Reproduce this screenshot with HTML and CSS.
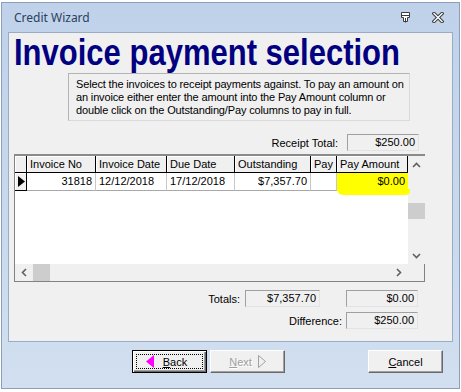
FILE: index.html
```html
<!DOCTYPE html>
<html lang="en">
<head>
  <meta charset="UTF-8" />
  <title>Credit Wizard</title>
  <link rel="stylesheet" href="styles.css">
</head>
<body>
  <div class="window">
    <div class="titlebar">
      <span class="caption">Credit Wizard</span>
      <div class="caption-icons">
        <svg class="pin" width="11" height="11" viewBox="0 0 11 11">
          <path d="M1.5 0.5 H9.5 V5.5 H7.5 V9.5 H3.5 V5.5 H1.5 Z" fill="#fff" stroke="#3c3c3c" />
          <path d="M1.5 3.5 H9.5" stroke="#3c3c3c" />
          <path d="M5.5 6 V10.5" stroke="#3c3c3c" />
        </svg>
        <svg class="close" width="12" height="11" viewBox="0 0 12 11">
          <path d="M2 1.5 L10 9.5 M10 1.5 L2 9.5" stroke="#3c3c3c" stroke-width="3.4" stroke-linecap="square" />
          <path d="M2 1.5 L10 9.5 M10 1.5 L2 9.5" stroke="#fff" stroke-width="1.4" stroke-linecap="square" />
        </svg>
      </div>
    </div>

    <div class="panel">
      <h1 class="heading">
        <svg width="440" height="40">
          <text x="5" y="32" textLength="386" lengthAdjust="spacingAndGlyphs">Invoice payment selection</text>
        </svg>
      </h1>

      <p class="intro">
        Select the invoices to receipt payments against. To pay an amount on<br>
        an invoice either enter the amount into the Pay Amount column or<br>
        double click on the Outstanding/Pay columns to pay in full.
      </p>

      <div class="receipt">
        <span class="label">Receipt Total:</span>
        <span class="field">$250.00</span>
      </div>

      <div class="grid">
        <div class="grid-main">
          <div class="grid-cells">
            <div class="grid-head">
              <span class="hcell"></span>
              <span class="hcell">Invoice No</span>
              <span class="hcell">Invoice Date</span>
              <span class="hcell">Due Date</span>
              <span class="hcell">Outstanding</span>
              <span class="hcell">Pay</span>
              <span class="hcell">Pay Amount</span>
            </div>
            <div class="grid-row">
              <span class="selector">
                <svg width="7" height="11" viewBox="0 0 7 11"><path d="M0 0 L7 5.5 L0 11 Z" fill="#000" /></svg>
              </span>
              <span class="cell num">31818</span>
              <span class="cell">12/12/2018</span>
              <span class="cell">17/12/2018</span>
              <span class="cell num">$7,357.70</span>
              <span class="cell"></span>
              <span class="cell num highlight">$0.00</span>
            </div>
          </div>
          <div class="vscroll">
            <span class="arrow">
              <svg width="9" height="6" viewBox="0 0 9 6"><path d="M1 5 L4.5 1.5 L8 5" fill="none" stroke="#606060" stroke-width="1.6" /></svg>
            </span>
            <div class="track"><span class="thumb"></span></div>
            <span class="arrow">
              <svg width="9" height="6" viewBox="0 0 9 6"><path d="M1 1 L4.5 4.5 L8 1" fill="none" stroke="#606060" stroke-width="1.6" /></svg>
            </span>
          </div>
        </div>
        <div class="hscroll-row">
          <div class="hscroll">
            <span class="arrow">
              <svg width="6" height="9" viewBox="0 0 6 9"><path d="M5 1 L1.5 4.5 L5 8" fill="none" stroke="#606060" stroke-width="1.6" /></svg>
            </span>
            <span class="hthumb"></span>
            <span class="spacer"></span>
            <span class="arrow">
              <svg width="6" height="9" viewBox="0 0 6 9"><path d="M1 1 L4.5 4.5 L1 8" fill="none" stroke="#606060" stroke-width="1.6" /></svg>
            </span>
          </div>
          <span class="corner"></span>
        </div>
      </div>

      <div class="totals">
        <span class="label">Totals:</span>
        <span class="field">$7,357.70</span>
        <span></span>
        <span class="field">$0.00</span>
        <span class="label wide">Difference:</span>
        <span class="field">$250.00</span>
      </div>
    </div>

    <div class="buttons">
      <button class="btn default">
        <span class="focus">
          <svg width="8" height="13" viewBox="0 0 8 13"><path d="M8 0 L0 6.5 L8 13 Z" fill="#ff00ff" /></svg>
          <span><u>B</u>ack</span>
        </span>
      </button>
      <button class="btn disabled">
        <span><u>N</u>ext</span>
        <svg width="8" height="13" viewBox="0 0 8 13"><path d="M0.5 0.5 L7.5 6.5 L0.5 12.5 Z" fill="none" stroke="#a0a0a0" /></svg>
      </button>
      <button class="btn cancel"><span><u>C</u>ancel</span></button>
    </div>
  </div>
</body>
</html>
```

FILE: styles.css
```css
* {
  box-sizing: border-box;
}

body {
  margin: 0;
  background: #ffffff;
  font-family: "Liberation Sans", Arial, sans-serif;
  font-size: 11px;
  color: #000;
}

.window {
  margin: 2px 1px 0;
  height: 387px;
  border: 1px solid #8c9fba;
  background: linear-gradient(#bfd2ea, #d1dff0);
  display: flex;
  flex-direction: column;
}

.titlebar {
  height: 29px;
  display: flex;
  align-items: center;
  padding: 0 0 0 12px;
}

.caption {
  font-family: "Noto Sans", sans-serif;
  font-size: 12px;
  color: #2b3f5e;
  flex: 1;
}

.caption-icons {
  display: flex;
  align-items: center;
  gap: 21px;
  margin-right: 15px;
}

.panel {
  margin: 0 6px;
  height: 310px;
  border: 1px solid #9aabc3;
  background: #f0f0f0;
}

.heading {
  margin: 0 0 -2px;
  height: 40px;
  line-height: 0;
}

.heading svg {
  overflow: visible;
}

.heading text {
  font-family: "Liberation Sans", Arial, sans-serif;
  font-size: 36px;
  font-weight: bold;
  fill: #000080;
}

.intro {
  margin: 2px 0 0 59px;
  width: 342px;
  height: 48px;
  padding: 4px 0 0 7px;
  border: 1px solid #b4b4b4;
  border-right-color: #dadada;
  border-bottom-color: #dadada;
  line-height: 13px;
  letter-spacing: -0.15px;
  white-space: nowrap;
}

.field {
  height: 17px;
  border: 1px solid #a0a0a0;
  border-right-color: #e3e3e3;
  border-bottom-color: #e3e3e3;
  padding-right: 3px;
  text-align: right;
  line-height: 15px;
}

.receipt {
  margin-top: 13px;
  margin-right: 33px;
  display: flex;
  justify-content: flex-end;
  align-items: center;
  gap: 9px;
}

.receipt .field {
  width: 72px;
}

.grid {
  margin: 3px 0 0 5px;
  width: 411px;
  height: 128px;
  border: 1px solid #828282;
  border-top: 2px solid #8a8a8a;
  display: flex;
  flex-direction: column;
}

.grid-main {
  flex: 1;
  display: flex;
}

.grid-cells {
  flex: 1;
  background: #fff;
}

.grid-head,
.grid-row {
  display: grid;
  grid-template-columns: 12px 69px 71px 68px 76px 26px 71px;
}

.grid-head {
  height: 17px;
}

.hcell {
  background: #f0f0f0;
  border-right: 1px solid #000;
  border-bottom: 1px solid #000;
  box-shadow: inset 1px 1px #fff;
  padding-left: 3px;
  line-height: 16px;
  white-space: nowrap;
}

.grid-row {
  height: 18px;
}

.selector {
  background: #f0f0f0;
  border-right: 1px solid #000;
  border-bottom: 1px solid #000;
  box-shadow: inset 1px 1px #fff;
  display: flex;
  align-items: center;
  padding-left: 3px;
}

.cell {
  border-right: 1px solid #c8c8c8;
  border-bottom: 1px solid #a8a8a8;
  padding: 0 3px;
  line-height: 17px;
  white-space: nowrap;
}

.cell.num {
  text-align: right;
}

.highlight {
  position: relative;
  background: #ffff00;
  border-bottom-color: #ffff00;
  border-right: none;
}

.highlight::after {
  content: "";
  position: absolute;
  left: 0;
  right: -2px;
  bottom: -5px;
  height: 6px;
  border-radius: 0 0 10px 14px;
  background: #ffff00;
}

.vscroll {
  width: 17px;
  display: flex;
  flex-direction: column;
  background: #f0f0f0;
}

.arrow {
  height: 17px;
  width: 17px;
  display: flex;
  align-items: center;
  justify-content: center;
  flex-shrink: 0;
}

.track {
  flex: 1;
}

.thumb {
  display: block;
  margin-top: 30px;
  height: 16px;
  background: #cdcdcd;
}

.hscroll-row {
  height: 17px;
  display: flex;
}

.hscroll {
  flex: 1;
  display: flex;
  background: #f0f0f0;
}

.hthumb {
  width: 17px;
  margin-left: 1px;
  background: #cdcdcd;
}

.spacer {
  flex: 1;
}

.corner {
  width: 17px;
  background: #f0f0f0;
}

.totals {
  margin-top: 8px;
  display: grid;
  grid-template-columns: 236px 75px 26px 72px;
  grid-template-rows: 17px 17px;
  row-gap: 5px;
  align-items: center;
}

.totals .label {
  text-align: right;
  padding-right: 5px;
}

.totals .label.wide {
  grid-column: 1 / 4;
  padding-right: 4px;
}

.buttons {
  display: flex;
  padding: 8px 16px 0 130px;
  gap: 3px;
}

.btn {
  width: 75px;
  height: 23px;
  font-family: "Liberation Sans", Arial, sans-serif;
  font-size: 11px;
  color: #000;
  background: #f0f0f0;
  border: 1px solid;
  border-color: #fff #696969 #696969 #fff;
  box-shadow: inset -1px -1px #a0a0a0;
  padding: 0;
  display: flex;
  align-items: center;
  justify-content: center;
  gap: 6px;
}

.btn.default {
  border: 1px solid #000;
  box-shadow: inset 1px 1px #fff, inset -1px -1px #696969, inset -2px -2px #a0a0a0;
}

.focus {
  display: flex;
  align-items: center;
  justify-content: center;
  gap: 9px;
  width: 67px;
  height: 15px;
  border: 1px dotted #000;
  padding-right: 6px;
}

.btn.disabled {
  color: #a0a0a0;
  text-shadow: 1px 1px #fff;
}

.btn.cancel {
  margin-left: auto;
}
```
